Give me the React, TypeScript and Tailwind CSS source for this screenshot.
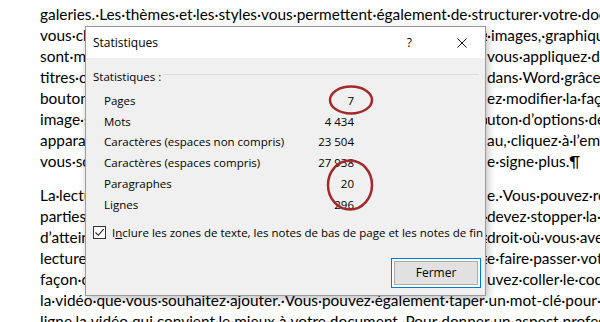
import React from "react";

const docFont = { fontFamily: "Lato, 'Open Sans', sans-serif" };
const uiFont = { fontFamily: "'Open Sans', 'Noto Sans', sans-serif" };

type Line = { left: string; right?: string };

const para1: Line[] = [
  { left: "galeries.·Les·thèmes·et·les·styles·vous·permettent·également·de·structurer·votre·document.·Lorsque" },
  { left: "vous·cliquez·sur·Conception·et·sélectionnez·un·nouveau·thème,·les", right: "·images,·graphiques·et" },
  { left: "sont·modifiés·pour·correspondre·au·nouveau·thème.·Lorsque", right: "vous·appliquez·des·styles," },
  { left: "titres·changent·pour·refléter·le·nouveau·thème.·Gagnez·du·temps", right: "dans·Word·grâce·aux·nouveaux" },
  { left: "boutons·qui·s'affichent·là·où·vous·en·avez·besoin.·Si·vous·souhait", right: "ez·modifier·la·façon·dont" },
  { left: "image·s'ajuste·à·votre·document,·cliquez·dessus·pour·afficher·un·bo", right: "uton·d’options·de·disposition" },
  { left: "apparaît·en·regard·de·celle-ci.·Lorsque·vous·travaillez·sur·un·table", right: "au,·cliquez·à·l’emplacement" },
  { left: "vous·souhaitez·ajouter·une·ligne·ou·une·colonne,·puis·cliquez·sur·l", right: "e·signe·plus.¶" },
];

const para2: Line[] = [
  { left: "La·lecture·est·également·simplifiée·grâce·au·nouveau·mode·Lectur", right: "e.·Vous·pouvez·réduire" },
  { left: "parties·du·document·et·vous·concentrer·sur·le·texte·voulu.·Si·vous·", right: "devez·stopper·la·lecture" },
  { left: "d’atteindre·la·fin,·Word·se·souvient·de·l’endroit·où·vous·vous·êtes·arrêté·l’en", right: "droit·où·vous·avez" },
  { left: "lecture,·même·sur·un·autre·appareil.·La·vidéo·vous·aide·à·faire·passer·vo·aide·à·l", right: "e·faire·passer·votre" },
  { left: "façon·convaincante.·Lorsque·vous·cliquez·sur·Vidéo·en·ligne,·vous·po", right: "uvez·coller·le·code" },
  { left: "la·vidéo·que·vous·souhaitez·ajouter.·Vous·pouvez·également·taper·un·mot-clé·pour·rechercher·en" },
  { left: "ligne·la·vidéo·qui·convient·le·mieux·à·votre·document.·Pour·donner·un·aspect·professionnel" },
];

function DocLine({ line }: { line: Line }) {
  if (!line.right) {
    return <div className="h-[21px] whitespace-nowrap">{line.left}</div>;
  }
  return (
    <div className="flex h-[21px] whitespace-nowrap">
      <span className="w-[447px] shrink-0 overflow-hidden">{line.left}</span>
      <span>{line.right}</span>
    </div>
  );
}

const stats: [string, string][] = [
  ["Pages", "7"],
  ["Mots", "4 434"],
  ["Caractères (espaces non compris)", "23 504"],
  ["Caractères (espaces compris)", "27 938"],
  ["Paragraphes", "20"],
  ["Lignes", "296"],
];

export default function App() {
  return (
    <div className="relative h-[322px] w-[600px] overflow-hidden bg-white text-black">
      {/* Word document text */}
      <div className="pl-[40px] pt-[4px] text-[15.4px] leading-[21px]" style={docFont}>
        {para1.map((l, i) => (
          <DocLine key={"a" + i} line={l} />
        ))}
        <div className="h-[13px]" />
        {para2.map((l, i) => (
          <DocLine key={"b" + i} line={l} />
        ))}
      </div>

      {/* Dialog */}
      <div
        className="absolute left-[85px] top-[26px] flex h-[270px] w-[401px] flex-col border border-[#9a9a9a] bg-[#f0f0f0] text-[11.5px] text-black shadow-[2px_3px_8px_rgba(0,0,0,0.25)]"
        style={uiFont}
      >
        <div className="flex h-[31px] shrink-0 items-center bg-white pl-[7px]">
          <span className="text-[12px]">Statistiques</span>
          <div className="flex-1" />
          <span className="mr-[27px] text-[12px]">?</span>
          <div className="flex h-full w-[46px] items-center justify-center">
            <svg width="10" height="10" viewBox="0 0 10 10">
              <path d="M0.5 0.5 L9.5 9.5 M9.5 0.5 L0.5 9.5" stroke="#111" strokeWidth="1" fill="none" />
            </svg>
          </div>
        </div>

        <div className="flex flex-1 flex-col">
          <div className="mt-[11px] flex h-[16px] items-center pl-[7px] pr-[6px]">
            <span>Statistiques :</span>
            <div className="ml-[2px] mt-[-6px] h-px flex-1 bg-[#dcdcdc]" />
          </div>

          <div className="mt-[5px] flex flex-col pl-[18px]">
            {stats.map(([k, v]) => (
              <div key={k} className="grid h-[20.8px] grid-cols-[190px_60px] items-center">
                <span>{k}</span>
                <span className="text-right">{v}</span>
              </div>
            ))}
          </div>

          <div className="mt-[10px] flex h-[16px] items-center pl-[7px]">
            <div className="flex h-[13px] w-[13px] items-center justify-center border border-[#333] bg-white">
              <svg width="11" height="11" viewBox="0 0 11 11">
                <path d="M1.5 5.5 L4.3 8.3 L9.6 2.2" stroke="#222" strokeWidth="1.1" fill="none" />
              </svg>
            </div>
            <span className="ml-[6px]">
              I<span className="underline">n</span>clure les zones de texte, les notes de bas de page et les notes de fin
            </span>
          </div>

          <div className="flex-1" />
          <div className="mb-[7px] mr-[4px] flex justify-end">
            <div className="flex h-[30px] w-[90px] border border-[#0078d7] bg-white p-[2px]">
              <div className="flex flex-1 items-center justify-center border border-[#adadad] bg-[#e1e1e1] text-[12px]">
                Fermer
              </div>
            </div>
          </div>
        </div>
      </div>

      {/* Annotation circles */}
      <svg className="pointer-events-none absolute left-0 top-0" width="600" height="322" viewBox="0 0 600 322">
        <ellipse cx="351" cy="100" rx="21" ry="13.5" fill="none" stroke="#a3282b" strokeWidth="2.5" />
        <ellipse cx="350" cy="185" rx="22" ry="24.5" fill="none" stroke="#a3282b" strokeWidth="2.5" />
      </svg>
    </div>
  );
}
